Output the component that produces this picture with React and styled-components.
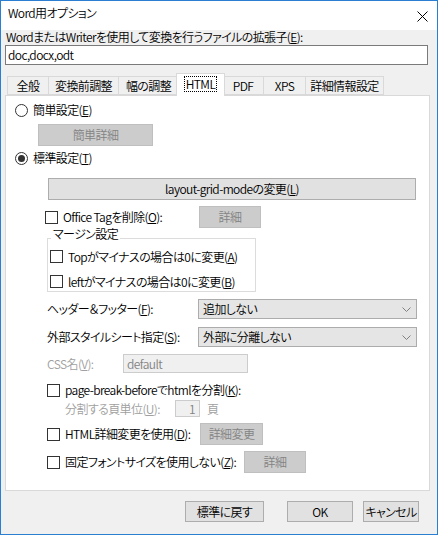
import React from "react";
import styled, { createGlobalStyle } from "styled-components";

const GlobalStyle = createGlobalStyle`
  html, body {
    margin: 0;
    padding: 0;
    background: #fff;
  }
  body {
    font-family: "Noto Sans CJK JP", "Noto Sans", sans-serif;
    font-size: 12px;
    font-weight: 350;
    letter-spacing: -0.6px;
    font-feature-settings: "palt";
    color: #000;
  }
  * {
    box-sizing: border-box;
  }
`;

const Window = styled.div`
  width: 438px;
  height: 535px;
  border: 1px solid #2b7fd2;
  display: flex;
  flex-direction: column;
  background: #f0f0f0;
`;

const TitleBar = styled.div`
  height: 29px;
  flex: none;
  background: #fff;
  display: flex;
  justify-content: space-between;
  align-items: flex-start;
  padding: 5px 9px 0 7px;
  line-height: 14px;
`;

const Body = styled.div`
  flex: 1;
  display: flex;
  flex-direction: column;
  padding: 0 4px;
`;

const Caption = styled.div`
  height: 14px;
  line-height: 14px;
  padding-left: 1px;
  white-space: nowrap;
`;

const TextBox = styled.div`
  margin-top: 1px;
  width: 423px;
  height: 20px;
  border: 1px solid #7a7a7a;
  background: #fff;
  padding-left: 2px;
  line-height: 18px;
`;

const Tabs = styled.div`
  margin-top: 8px;
  height: 22px;
  display: flex;
  align-items: flex-end;
  padding-left: 2px;
`;

const Tab = styled.div`
  position: relative;
  width: ${(p) => (p.$active ? p.$w + 4 : p.$w)}px;
  height: ${(p) => (p.$active ? 23 : 19)}px;
  margin: ${(p) => (p.$active ? "0 -3px -1px -2px" : "0 -1px 0 0")};
  z-index: ${(p) => (p.$active ? 2 : 1)};
  border: 1px solid #d9d9d9;
  border-bottom: ${(p) => (p.$active ? "none" : "1px solid #d9d9d9")};
  background: ${(p) => (p.$active ? "#fff" : "#f0f0f0")};
  display: flex;
  justify-content: center;
  align-items: ${(p) => (p.$active ? "flex-start" : "center")};
  padding-top: ${(p) => (p.$active ? "3px" : "0")};
  line-height: 14px;
  white-space: nowrap;

  span {
    outline: ${(p) => (p.$active ? "1px dotted #000" : "none")};
    padding: 0 1px;
  }
`;

const Panel = styled.div`
  width: 425px;
  height: 396px;
  border: 1px solid #d9d9d9;
  background: #fff;
  display: flex;
  flex-direction: column;
`;

const Row = styled.div`
  display: flex;
  align-items: center;
  height: ${(p) => p.$h}px;
  margin-top: ${(p) => p.$top}px;
  padding-left: ${(p) => p.$indent}px;
  white-space: nowrap;
  line-height: 14px;
`;

const Option = styled.label`
  display: flex;
  align-items: center;
  gap: ${(p) => p.$gap ?? 5}px;
  width: ${(p) => (p.$w ? `${p.$w}px` : "auto")};
  flex: none;
`;

const Radio = styled.span`
  width: 13px;
  height: 13px;
  border: 1px solid #333;
  border-radius: 50%;
  display: flex;
  align-items: center;
  justify-content: center;
  background: #fff;

  &::after {
    content: "";
    width: 7px;
    height: 7px;
    border-radius: 50%;
    background: ${(p) => (p.$on ? "#333" : "transparent")};
  }
`;

const Check = styled.span`
  width: 13px;
  height: 13px;
  border: 1px solid #333;
  background: #fff;
  flex: none;
`;

const Button = styled.div`
  width: ${(p) => p.$w}px;
  height: ${(p) => p.$h ?? 22}px;
  margin-left: ${(p) => p.$left ?? 0}px;
  border: 1px solid ${(p) => (p.$off ? "#bfbfbf" : "#adadad")};
  background: ${(p) => (p.$off ? "#cccccc" : "#e1e1e1")};
  color: ${(p) => (p.$off ? "#838383" : "#000")};
  display: flex;
  align-items: center;
  justify-content: center;
  line-height: 14px;
  flex: none;
  white-space: nowrap;
`;

const Muted = styled.span`
  color: #a0a0a0;
  margin-left: ${(p) => p.$left}px;
`;

const Label = styled.span`
  width: ${(p) => p.$w}px;
  flex: none;
  color: ${(p) => (p.$off ? "#a0a0a0" : "#000")};
`;

const Select = styled.div`
  width: 219px;
  height: ${(p) => p.$h}px;
  border: 1px solid #acacac;
  background: #e5e5e5;
  display: flex;
  align-items: center;
  justify-content: space-between;
  padding: 0 5px 0 4px;
  line-height: 14px;
`;

const Field = styled.div`
  width: ${(p) => p.$w}px;
  height: ${(p) => p.$h}px;
  margin-left: ${(p) => p.$left ?? 0}px;
  border: 1px solid #cccccc;
  background: #f0f0f0;
  color: #838383;
  display: flex;
  align-items: center;
  justify-content: ${(p) => (p.$right ? "flex-end" : "flex-start")};
  padding: 0 4px 0 3px;
  line-height: 14px;
`;

const Group = styled.div`
  position: relative;
  margin: 10px 0 0 41px;
  width: 209px;
  height: 54px;
  border: 1px solid #dcdcdc;
  padding: 9px 0 0 2px;
  display: flex;
  flex-direction: column;
  gap: 8px;
`;

const GroupTitle = styled.span`
  position: absolute;
  left: 3px;
  top: -12px;
  padding: 0 2px;
  background: #fff;
  line-height: 14px;
  white-space: nowrap;
`;

const Footer = styled.div`
  margin-top: 10px;
  display: flex;
  justify-content: flex-end;
  padding-right: ${(p) => p.$pad}px;
`;

const Chevron = () => (
  <svg width="9" height="5" viewBox="0 0 9 5">
    <path d="M0.5 0.5 L4.5 4.5 L8.5 0.5" fill="none" stroke="#808080" strokeWidth="1" />
  </svg>
);

const CloseIcon = () => (
  <svg width="11" height="11" viewBox="0 0 11 11" style={{ marginTop: 5 }}>
    <path d="M0.5 0.5 L10.5 10.5 M10.5 0.5 L0.5 10.5" stroke="#000" strokeWidth="1" />
  </svg>
);

const tabs = [
  ["全般", 42],
  ["変換前調整", 71],
  ["幅の調整", 61],
  ["HTML", 45],
  ["PDF", 42],
  ["XPS", 43],
  ["詳細情報設定", 79],
];

export default function App() {
  return (
    <>
      <GlobalStyle />
      <Window>
        <TitleBar>
          <span>Word用オプション</span>
          <CloseIcon />
        </TitleBar>
        <Body>
          <Caption>
            WordまたはWriterを使用して変換を行うファイルの拡張子(<u>E</u>):
          </Caption>
          <TextBox>doc,docx,odt</TextBox>
          <Tabs>
            {tabs.map(([name, w]) => (
              <Tab key={name} $w={w} $active={name === "HTML"}>
                <span>{name}</span>
              </Tab>
            ))}
          </Tabs>
          <Panel>
            <Row $h={18} $top={5} $indent={9}>
              <Option>
                <Radio />
                <span>
                  簡単設定(<u>E</u>)
                </span>
              </Option>
            </Row>
            <Row $h={22} $top={5} $indent={32}>
              <Button $w={115} $off>
                簡単詳細
              </Button>
            </Row>
            <Row $h={18} $top={3} $indent={9}>
              <Option>
                <Radio $on />
                <span>
                  標準設定(<u>T</u>)
                </span>
              </Option>
            </Row>
            <Row $h={22} $top={11} $indent={42}>
              <Button $w={368}>
                layout-grid-modeの変更(<u>L</u>)
              </Button>
            </Row>
            <Row $h={22} $top={6} $indent={39}>
              <Option $w={154}>
                <Check />
                <span>
                  Office Tagを削除(<u>O</u>):
                </span>
              </Option>
              <Button $w={62} $off>
                詳細
              </Button>
            </Row>
            <Group>
              <GroupTitle>マージン設定</GroupTitle>
              <Option>
                <Check />
                <span>
                  Topがマイナスの場合は0に変更(<u>A</u>)
                </span>
              </Option>
              <Option>
                <Check />
                <span>
                  leftがマイナスの場合は0に変更(<u>B</u>)
                </span>
              </Option>
            </Group>
            <Row $h={20} $top={7} $indent={41}>
              <Label $w={151}>
                ヘッダー＆フッター(<u>F</u>):
              </Label>
              <Select $h={20}>
                <span>追加しない</span>
                <Chevron />
              </Select>
            </Row>
            <Row $h={20} $top={8} $indent={41}>
              <Label $w={151}>
                外部スタイルシート指定(<u>S</u>):
              </Label>
              <Select $h={20}>
                <span>外部に分離しない</span>
                <Chevron />
              </Select>
            </Row>
            <Row $h={19} $top={7} $indent={41}>
              <Label $w={76} $off>
                CSS名(<u>V</u>):
              </Label>
              <Field $w={125} $h={19}>
                default
              </Field>
            </Row>
            <Row $h={18} $top={8} $indent={41}>
              <Option>
                <Check />
                <span>
                  page-break-beforeでhtmlを分割(<u>K</u>):
                </span>
              </Option>
            </Row>
            <Row $h={17} $top={1} $indent={59}>
              <Label $w={110} $off>
                分割する頁単位(<u>U</u>):
              </Label>
              <Field $w={25} $h={17} $right>
                1
              </Field>
              <Muted $left={7}>頁</Muted>
            </Row>
            <Row $h={22} $top={6} $indent={41}>
              <Option $w={153}>
                <Check />
                <span>
                  HTML詳細変更を使用(<u>D</u>):
                </span>
              </Option>
              <Button $w={63} $off>
                詳細変更
              </Button>
            </Row>
            <Row $h={22} $top={6} $indent={41}>
              <Option $w={197}>
                <Check />
                <span>
                  固定フォントサイズを使用しない(<u>Z</u>):
                </span>
              </Option>
              <Button $w={62} $off>
                詳細
              </Button>
            </Row>
          </Panel>
          <Footer $pad={14}>
            <Button $w={79} $h={21}>
              標準に戻す
            </Button>
            <Button $w={66} $h={21} $left={23}>
              OK
            </Button>
            <Button $w={56} $h={21} $left={10}>
              キャンセル
            </Button>
          </Footer>
        </Body>
      </Window>
    </>
  );
}
